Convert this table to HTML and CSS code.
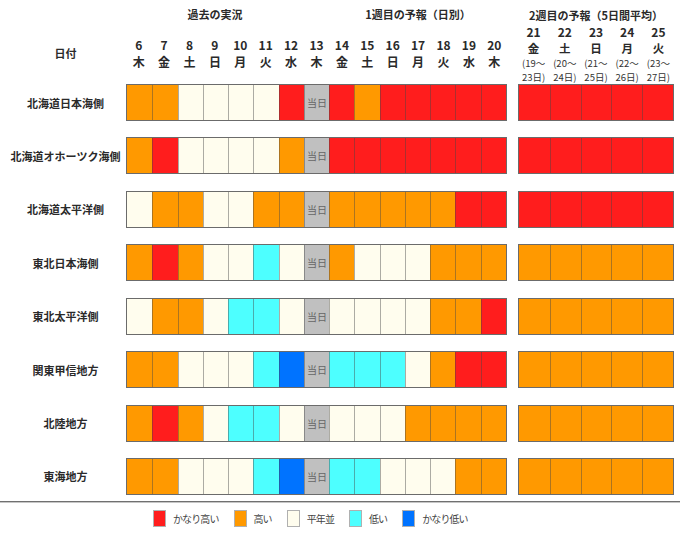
FILE: index.html
```html
<!DOCTYPE html>
<html lang="ja">
<head>
<meta charset="utf-8">
<title>気温の見通し</title>
<link rel="stylesheet" href="styles.css">
</head>
<body>
<div class="page">
  <div class="head">
    <div class="lab-col"><span class="hdate">日付</span></div>
    <div class="g1h">
      <div class="titles">
        <div class="t-past">過去の実況</div>
        <div class="t-w1">1週目の予報（日別）</div>
      </div>
      <div class="days15">
        <div class="d"><span class="n">6</span><span class="w">木</span></div>
        <div class="d"><span class="n">7</span><span class="w">金</span></div>
        <div class="d"><span class="n">8</span><span class="w">土</span></div>
        <div class="d"><span class="n">9</span><span class="w">日</span></div>
        <div class="d"><span class="n">10</span><span class="w">月</span></div>
        <div class="d"><span class="n">11</span><span class="w">火</span></div>
        <div class="d"><span class="n">12</span><span class="w">水</span></div>
        <div class="d"><span class="n">13</span><span class="w">木</span></div>
        <div class="d"><span class="n">14</span><span class="w">金</span></div>
        <div class="d"><span class="n">15</span><span class="w">土</span></div>
        <div class="d"><span class="n">16</span><span class="w">日</span></div>
        <div class="d"><span class="n">17</span><span class="w">月</span></div>
        <div class="d"><span class="n">18</span><span class="w">火</span></div>
        <div class="d"><span class="n">19</span><span class="w">水</span></div>
        <div class="d"><span class="n">20</span><span class="w">木</span></div>
      </div>
    </div>
    <div class="g2h">
      <div class="t-w2">2週目の予報（5日間平均）</div>
      <div class="days5">
        <div class="d"><span class="n">21</span><span class="w">金</span><span class="rg">(19～</span><span class="rg">23日)</span></div>
        <div class="d"><span class="n">22</span><span class="w">土</span><span class="rg">(20～</span><span class="rg">24日)</span></div>
        <div class="d"><span class="n">23</span><span class="w">日</span><span class="rg">(21～</span><span class="rg">25日)</span></div>
        <div class="d"><span class="n">24</span><span class="w">月</span><span class="rg">(22～</span><span class="rg">26日)</span></div>
        <div class="d"><span class="n">25</span><span class="w">火</span><span class="rg">(23～</span><span class="rg">27日)</span></div>
      </div>
    </div>
  </div>

  <div class="rows">
    <div class="row">
      <div class="lab">北海道日本海側</div>
      <div class="g1"><i class="o"></i><i class="o"></i><i class="c"></i><i class="c"></i><i class="c"></i><i class="c"></i><i class="r"></i><i class="t">当日</i><i class="r"></i><i class="o"></i><i class="r"></i><i class="r"></i><i class="r"></i><i class="r"></i><i class="r"></i></div>
      <div class="g2"><i class="r"></i><i class="r"></i><i class="r"></i><i class="r"></i><i class="r"></i></div>
    </div>
    <div class="row">
      <div class="lab">北海道オホーツク海側</div>
      <div class="g1"><i class="o"></i><i class="r"></i><i class="c"></i><i class="c"></i><i class="c"></i><i class="c"></i><i class="o"></i><i class="t">当日</i><i class="r"></i><i class="r"></i><i class="r"></i><i class="r"></i><i class="r"></i><i class="r"></i><i class="r"></i></div>
      <div class="g2"><i class="r"></i><i class="r"></i><i class="r"></i><i class="r"></i><i class="r"></i></div>
    </div>
    <div class="row">
      <div class="lab">北海道太平洋側</div>
      <div class="g1"><i class="c"></i><i class="o"></i><i class="o"></i><i class="c"></i><i class="c"></i><i class="o"></i><i class="o"></i><i class="t">当日</i><i class="o"></i><i class="o"></i><i class="o"></i><i class="o"></i><i class="o"></i><i class="r"></i><i class="r"></i></div>
      <div class="g2"><i class="r"></i><i class="r"></i><i class="r"></i><i class="r"></i><i class="r"></i></div>
    </div>
    <div class="row">
      <div class="lab">東北日本海側</div>
      <div class="g1"><i class="o"></i><i class="r"></i><i class="o"></i><i class="c"></i><i class="c"></i><i class="l"></i><i class="c"></i><i class="t">当日</i><i class="o"></i><i class="c"></i><i class="c"></i><i class="c"></i><i class="o"></i><i class="o"></i><i class="o"></i></div>
      <div class="g2"><i class="o"></i><i class="o"></i><i class="o"></i><i class="o"></i><i class="o"></i></div>
    </div>
    <div class="row">
      <div class="lab">東北太平洋側</div>
      <div class="g1"><i class="c"></i><i class="o"></i><i class="o"></i><i class="c"></i><i class="l"></i><i class="l"></i><i class="c"></i><i class="t">当日</i><i class="c"></i><i class="c"></i><i class="c"></i><i class="c"></i><i class="o"></i><i class="o"></i><i class="r"></i></div>
      <div class="g2"><i class="o"></i><i class="o"></i><i class="o"></i><i class="o"></i><i class="o"></i></div>
    </div>
    <div class="row">
      <div class="lab">関東甲信地方</div>
      <div class="g1"><i class="o"></i><i class="o"></i><i class="c"></i><i class="c"></i><i class="c"></i><i class="l"></i><i class="b"></i><i class="t">当日</i><i class="l"></i><i class="l"></i><i class="l"></i><i class="c"></i><i class="o"></i><i class="r"></i><i class="r"></i></div>
      <div class="g2"><i class="o"></i><i class="o"></i><i class="o"></i><i class="o"></i><i class="o"></i></div>
    </div>
    <div class="row">
      <div class="lab">北陸地方</div>
      <div class="g1"><i class="o"></i><i class="r"></i><i class="o"></i><i class="c"></i><i class="l"></i><i class="l"></i><i class="c"></i><i class="t">当日</i><i class="c"></i><i class="c"></i><i class="c"></i><i class="o"></i><i class="o"></i><i class="o"></i><i class="o"></i></div>
      <div class="g2"><i class="o"></i><i class="o"></i><i class="o"></i><i class="o"></i><i class="o"></i></div>
    </div>
    <div class="row">
      <div class="lab">東海地方</div>
      <div class="g1"><i class="o"></i><i class="o"></i><i class="c"></i><i class="c"></i><i class="c"></i><i class="l"></i><i class="b"></i><i class="t">当日</i><i class="l"></i><i class="l"></i><i class="c"></i><i class="c"></i><i class="c"></i><i class="o"></i><i class="o"></i></div>
      <div class="g2"><i class="o"></i><i class="o"></i><i class="o"></i><i class="o"></i><i class="o"></i></div>
    </div>
  </div>

  <div class="sep"></div>

  <div class="legend">
    <div class="item"><span class="sw r"></span><span class="lt">かなり高い</span></div>
    <div class="item"><span class="sw o"></span><span class="lt">高い</span></div>
    <div class="item"><span class="sw c"></span><span class="lt">平年並</span></div>
    <div class="item"><span class="sw l"></span><span class="lt">低い</span></div>
    <div class="item"><span class="sw b"></span><span class="lt">かなり低い</span></div>
  </div>
</div>
</body>
</html>
```

FILE: styles.css
```css
html, body {
  margin: 0;
  padding: 0;
  background: #ffffff;
}

.page {
  width: 680px;
  height: 537px;
  font-family: "Noto Sans CJK JP", "Noto Sans", sans-serif;
  color: #2a2a2a;
  overflow: hidden;
}

/* ---------- header ---------- */
.head {
  display: flex;
  height: 84px;
}

.lab-col {
  width: 121px;
  padding-left: 5px;
  text-align: center;
  padding-top: 45px;
  box-sizing: content-box;
}

.hdate {
  display: block;
  font-size: 11px;
  font-weight: bold;
  line-height: 16px;
}

.g1h {
  width: 381px;
  margin-right: 11px;
}

.titles {
  display: grid;
  grid-template-columns: repeat(15, 1fr);
  padding-top: 6px;
  font-size: 11px;
  font-weight: bold;
  line-height: normal;
}

.t-past {
  grid-column: 1 / 8;
  text-align: center;
}

.t-w1 {
  grid-column: 9 / 16;
  text-align: center;
}

.days15 {
  display: grid;
  grid-template-columns: repeat(15, 1fr);
  margin-top: 14px;
}

.d {
  display: flex;
  flex-direction: column;
  align-items: center;
  font-weight: bold;
}

.n {
  font-size: 12px;
  line-height: normal;
}

.w {
  font-size: 12px;
  line-height: normal;
}

.g2h {
  width: 156px;
  display: flex;
  flex-direction: column;
  justify-content: flex-end;
}

.t-w2 {
  font-size: 11px;
  font-weight: bold;
  line-height: normal;
  text-align: center;
}

.days5 {
  display: grid;
  grid-template-columns: repeat(5, 1fr);
}

.days5 .w {
  font-size: 11.5px;
}

.rg {
  font-size: 9.5px;
  font-weight: normal;
  line-height: normal;
  color: #333;
  white-space: nowrap;
}

/* ---------- rows ---------- */
.rows {
  display: flex;
  flex-direction: column;
  gap: 16.43px;
}

.row {
  display: flex;
  align-items: center;
  height: 37px;
}

.lab {
  width: 121px;
  padding-left: 5px;
  text-align: center;
  font-size: 11px;
  font-weight: bold;
  white-space: nowrap;
  box-sizing: content-box;
}

.g1,
.g2 {
  display: grid;
  height: 37px;
  box-sizing: border-box;
  border: 1px solid #6b6b6b;
}

.g1 {
  width: 381px;
  grid-template-columns: repeat(15, 1fr);
  margin-right: 11px;
}

.g2 {
  width: 156px;
  grid-template-columns: repeat(5, 1fr);
}

.g1 i,
.g2 i {
  display: flex;
  align-items: center;
  justify-content: center;
  font-style: normal;
  border-left: 1px solid rgba(70, 70, 70, 0.45);
}

.g1 i:first-child,
.g2 i:first-child {
  border-left: none;
}

.r { background: #ff1d1d; }
.o { background: #ff9900; }
.c { background: #fffdee; }
.l { background: #4dffff; }
.b { background: #0073ff; }
.t {
  background: #c0c0c0;
  font-size: 10px;
  color: #666;
}

/* ---------- separator & legend ---------- */
.sep {
  margin-top: 6px;
  height: 1px;
  background: #707070;
  box-shadow: 0 1px 0 #c6c6c6;
}

.legend {
  display: flex;
  align-items: center;
  padding-left: 153px;
  margin-top: 8px;
}

.item {
  display: flex;
  align-items: center;
  margin-right: 15px;
}

.sw {
  display: block;
  width: 13px;
  height: 17px;
  box-sizing: border-box;
  border: 1px solid #b0b0b0;
}

.lt {
  margin-left: 7px;
  font-size: 10px;
  letter-spacing: -0.9px;
  color: #444;
  line-height: 17px;
  white-space: nowrap;
}
```
